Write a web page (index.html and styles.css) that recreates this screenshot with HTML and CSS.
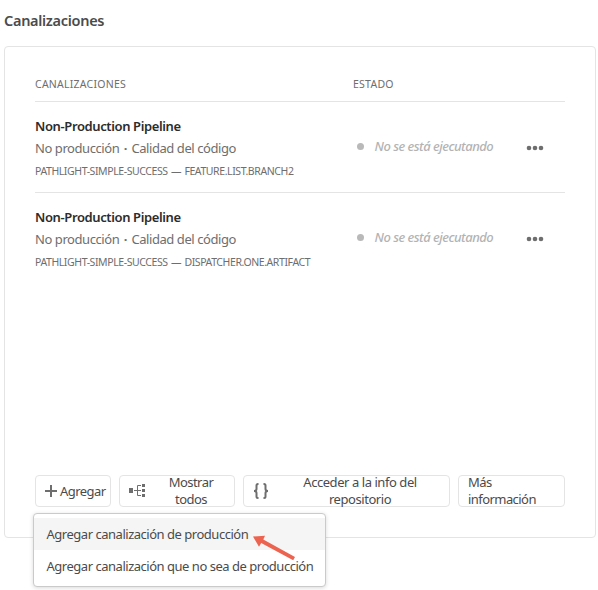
FILE: index.html
```html
<!DOCTYPE html>
<html lang="es">
<head>
<meta charset="utf-8">
<title>Canalizaciones</title>
<link rel="stylesheet" href="styles.css">
</head>
<body>
<h1 class="title">Canalizaciones</h1>
<main class="card">
  <div class="row head"><span>Canalizaciones</span><span>Estado</span></div>
  <div class="row item">
    <div class="info">
      <div class="name">Non-Production Pipeline</div>
      <div class="kind">No producción <span class="sep">·</span> Calidad del código</div>
      <div class="branch">PATHLIGHT-SIMPLE-SUCCESS <span class="dash">—</span> FEATURE.LIST.BRANCH2</div>
    </div>
    <div class="status"><i class="dot"></i><span class="state">No se está ejecutando</span></div>
    <svg class="more" viewBox="0 0 18 6"><circle cx="3" cy="3" r="2.3"/><circle cx="9" cy="3" r="2.3"/><circle cx="15" cy="3" r="2.3"/></svg>
  </div>
  <div class="row item last">
    <div class="info">
      <div class="name">Non-Production Pipeline</div>
      <div class="kind">No producción <span class="sep">·</span> Calidad del código</div>
      <div class="branch">PATHLIGHT-SIMPLE-SUCCESS <span class="dash">—</span> DISPATCHER.ONE.ARTIFACT</div>
    </div>
    <div class="status"><i class="dot"></i><span class="state">No se está ejecutando</span></div>
    <svg class="more" viewBox="0 0 18 6"><circle cx="3" cy="3" r="2.3"/><circle cx="9" cy="3" r="2.3"/><circle cx="15" cy="3" r="2.3"/></svg>
  </div>
  <div class="actions">
    <button class="btn add"><svg class="plus" viewBox="0 0 12 12"><path d="M6 0v12M0 6h12"/></svg><span class="label">Agregar</span></button>
    <button class="btn all"><svg class="tree" viewBox="0 0 17 14"><path class="solid" d="M0 4h4v5H0zM13 0h3v3h-3zM13 5h3v3h-3zM13 10h3v3h-3z"/><path class="wire" d="M5 6.500h7M12 1.500H8.500v10H12"/></svg><span class="label">Mostrar<br>todos</span></button>
    <button class="btn repo"><svg class="braces" viewBox="0 0 16 16"><path d="M5.500 1H5Q3.500 1 3.500 2.500V6Q3.500 8 1 8Q3.500 8 3.500 10v3.500Q3.500 15 5 15h.5M10.500 1h.5Q12.500 1 12.500 2.500V6q0 2 2.500 2q-2.500 0-2.500 2v3.500Q12.500 15 11 15h-.5"/></svg><span class="label">Acceder a la info del<br>repositorio</span></button>
    <button class="btn learn"><span class="label">Más<br>información</span></button>
  </div>
</main>
<div class="menu">
  <div class="option active">Agregar canalización de producción</div>
  <div class="option">Agregar canalización que no sea de producción</div>
</div>
<svg class="arrow" viewBox="0 0 44 28"><path d="M1 1.500L13 .8L11.300 4.600L43 22L41.200 25.200L9.200 8L7 11.800Z"/></svg>
</body>
</html>
```
FILE: styles.css
```css
* { box-sizing: border-box; }
body {
  margin: 0;
  height: 590px;
  overflow: hidden;
  position: relative;
  background: #fff;
  color: #4b4b4b;
  font: 13px/18px "Noto Sans", sans-serif;
  white-space: nowrap;
}
svg { display: block; flex: none; }
.title { margin: 0; padding: 10px 0 0 4px; height: 46px; font-size: 14.500px; line-height: 20px; font-weight: 600; letter-spacing: -0.3px; }
.card {
  display: flex;
  flex-direction: column;
  width: 592px;
  height: 492px;
  margin-left: 4px;
  padding: 28px 30px 30px;
  border: 1px solid #e4e4e4;
  border-radius: 4px;
}
.row { display: grid; grid-template-columns: 318px 173px 39px; border-bottom: 1px solid #e4e4e4; }
.head { height: 27px; font-size: 10.500px; line-height: 18px; text-transform: uppercase; color: #6e6e6e; letter-spacing: 0.25px; }
.item { height: 91px; padding-top: 15px; }
.last { border-bottom: 0; }
.name { height: 21px; line-height: 19px; font-weight: 600; color: #2c2c2c; letter-spacing: -0.38px; }
.kind { height: 23px; line-height: 20px; color: #6e6e6e; letter-spacing: -0.43px; }
.sep { margin: 0 1.500px; font-weight: 700; }
.branch { line-height: 20px; font-size: 10.500px; color: #6e6e6e; letter-spacing: -0.41px; }
.dash { margin: 0 1px; }
.status { display: flex; align-items: center; height: 58px; padding-left: 3.500px; color: #b3b3b3; font-style: italic; font-weight: 500; letter-spacing: -0.5px; }
.dot { width: 7px; height: 7px; margin-right: 11px; border-radius: 50%; background: #b9b9b9; }
.more { width: 18px; height: 6px; margin-top: 28px; fill: #6e6e6e; }
.actions { display: flex; gap: 8px; margin-top: auto; }
.btn {
  display: flex;
  align-items: center;
  height: 32px;
  padding: 0 9px;
  border: 1px solid #e4e4e4;
  border-radius: 4px;
  background: #fff;
  color: #4b4b4b;
  font: 13px/17px "Noto Sans", sans-serif;
  letter-spacing: -0.56px;
}
.label { flex: 1; text-align: center; margin-left: 11px; }
.add { width: 76px; }
.add .label { flex: none; margin-left: 3px; }
.all { width: 116px; }
.repo { width: 207px; letter-spacing: -0.44px; }
.learn { width: 107px; }
.learn .label { text-align: left; margin-left: 0; }
.plus { width: 12px; height: 12px; fill: none; stroke: #6e6e6e; stroke-width: 2; }
.tree { width: 17px; height: 14px; }
.solid { fill: #6e6e6e; }
.wire { fill: none; stroke: #6e6e6e; }
.braces { width: 16px; height: 16px; fill: none; stroke: #6e6e6e; stroke-width: 2; }
.menu {
  position: absolute;
  left: 33px;
  top: 513px;
  width: 293px;
  height: 74px;
  padding: 4px 0;
  border: 1px solid #cacaca;
  border-radius: 4px;
  background: #fff;
  box-shadow: 0 1px 4px rgba(0, 0, 0, 0.15);
}
.option { height: 32px; padding-left: 12.500px; line-height: 32px; letter-spacing: -0.48px; }
.active { background: #f5f5f5; }
.arrow { position: absolute; left: 252px; top: 535px; width: 44px; height: 28px; fill: #ec6450; }
```
